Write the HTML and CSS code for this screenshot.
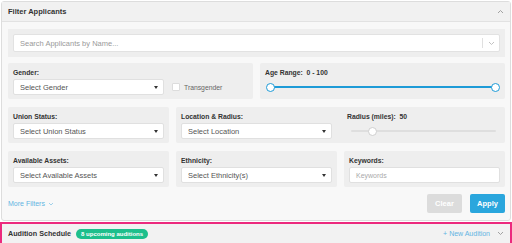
FILE: index.html
```html
<!DOCTYPE html>
<html lang="en">
<head>
  <meta charset="UTF-8">
  <meta name="viewport" content="width=device-width, initial-scale=1.0">
  <title>Filter Applicants</title>
  <link rel="stylesheet" href="styles.css">
</head>
<body>
  <div class="card">
    <div class="card-head">
      <span class="card-title">Filter Applicants</span>
      <svg class="chev" width="7" height="5" viewBox="0 0 7 5"><path d="M1 4 L3.5 1.5 L6 4" fill="none" stroke="#999" stroke-width="0.9"/></svg>
    </div>

    <div class="card-body">
      <div class="search-band">
        <div class="search-box">
          <span class="placeholder">Search Applicants by Name...</span>
          <span class="search-tools">
            <i class="divider"></i>
            <svg width="7" height="5" viewBox="0 0 7 5"><path d="M1 1 L3.5 3.5 L6 1" fill="none" stroke="#bbb" stroke-width="0.9"/></svg>
          </span>
        </div>
      </div>

      <div class="filters">
        <div class="panel span-3">
          <div class="label">Gender:</div>
          <div class="inline">
            <div class="select">Select Gender<i class="caret"></i></div>
            <label class="check"><span class="box"></span>Transgender</label>
          </div>
        </div>

        <div class="panel span-3">
          <div class="label">Age Range:&nbsp; 0 - 100</div>
          <div class="range range-age">
            <div class="track track-blue"></div>
            <span class="knob knob-blue" style="left:0%"></span>
            <span class="knob knob-blue" style="left:100%"></span>
          </div>
        </div>

        <div class="panel span-2">
          <div class="label">Union Status:</div>
          <div class="select">Select Union Status<i class="caret"></i></div>
        </div>

        <div class="panel span-4 location">
          <div class="loc-main">
            <div class="label">Location &amp; Radius:</div>
            <div class="select">Select Location<i class="caret"></i></div>
          </div>
          <div class="loc-radius">
            <div class="label">Radius (miles):&nbsp; 50</div>
            <div class="range range-radius">
              <div class="track"></div>
              <span class="knob" style="left:15%"></span>
            </div>
          </div>
        </div>

        <div class="panel span-2">
          <div class="label">Available Assets:</div>
          <div class="select">Select Available Assets<i class="caret"></i></div>
        </div>

        <div class="panel span-2">
          <div class="label">Ethnicity:</div>
          <div class="select">Select Ethnicity(s)<i class="caret"></i></div>
        </div>

        <div class="panel span-2">
          <div class="label">Keywords:</div>
          <div class="input">Keywords</div>
        </div>
      </div>

      <div class="actions">
        <a class="more">More Filters
          <svg width="6" height="4" viewBox="0 0 6 4"><path d="M1 1 L3 3 L5 1" fill="none" stroke="#8cc6e6" stroke-width="0.8"/></svg>
        </a>
        <div class="buttons">
          <button class="btn btn-clear">Clear</button>
          <button class="btn btn-apply">Apply</button>
        </div>
      </div>
    </div>
  </div>

  <div class="schedule">
    <div class="schedule-left">
      <span class="schedule-title">Audition Schedule</span>
      <span class="badge">8 upcoming auditions</span>
    </div>
    <div class="schedule-right">
      <a class="new-link">+ New Audition</a>
      <svg width="7" height="5" viewBox="0 0 7 5"><path d="M1 1 L3.5 3.5 L6 1" fill="none" stroke="#999" stroke-width="0.9"/></svg>
    </div>
  </div>
</body>
</html>
```

FILE: styles.css
```css
body {
  margin: 0;
  background: #fff;
  font-family: "Liberation Sans", Arial, sans-serif;
  color: #333;
}
.card {
  margin: 1px 1px 0;
  width: 508px;
  border: 1px solid #dddddd;
  border-radius: 3px;
  background: #f8f8f8;
}
.card-head {
  height: 19px;
  background: #f1f1f1;
  border-bottom: 1px solid #e2e2e2;
  display: flex;
  align-items: center;
  justify-content: space-between;
  padding: 0 6px;
}
.card-title {
  font-size: 7.5px;
  font-weight: bold;
  color: #333;
}
.card-body {
  padding: 7px 5px 7px 6px;
}
.search-band {
  background: #eeeeee;
  padding: 5px;
}
.search-box {
  height: 18px;
  box-sizing: border-box;
  background: #fff;
  border: 1px solid #e2e2e2;
  border-radius: 2px;
  display: flex;
  align-items: center;
  justify-content: space-between;
  padding: 0 4px 0 6px;
}
.placeholder {
  font-size: 7.5px;
  color: #9a9a9a;
}
.search-tools {
  display: flex;
  align-items: center;
  gap: 5px;
}
.divider {
  width: 1px;
  height: 10px;
  background: #e0e0e0;
}
.filters {
  display: grid;
  grid-template-columns: repeat(6, 1fr);
  column-gap: 7px;
  row-gap: 8px;
  margin-top: 6px;
}
.span-2 { grid-column: span 2; }
.span-3 { grid-column: span 3; }
.span-4 { grid-column: span 4; }
.panel {
  background: #eeeeee;
  padding: 5px 5px 4px;
  border-radius: 2px;
}
.label {
  font-size: 6.8px;
  font-weight: bold;
  color: #333;
  line-height: 9px;
  margin-bottom: 2px;
  white-space: nowrap;
}
.select, .input {
  width: 151px;
  height: 16px;
  box-sizing: border-box;
  background: #fff;
  border: 1px solid #e0e0e0;
  border-radius: 2px;
  font-size: 7.5px;
  color: #555;
  padding: 0 5px 0 6px;
  display: flex;
  align-items: center;
  justify-content: space-between;
  white-space: nowrap;
}
.input {
  color: #aaa;
  font-size: 7px;
}
.caret {
  width: 0;
  height: 0;
  border-left: 2px solid transparent;
  border-right: 2px solid transparent;
  border-top: 3px solid #333;
}
.inline {
  display: flex;
  align-items: center;
  gap: 8px;
}
.check {
  display: flex;
  align-items: center;
  gap: 4px;
  font-size: 6.8px;
  color: #666;
}
.box {
  width: 6px;
  height: 6px;
  background: #fff;
  border: 1px solid #dcdcdc;
  border-radius: 1px;
}
.range {
  position: relative;
  height: 16px;
  display: flex;
  align-items: center;
}
.range-age {
  margin: 0 5px;
}
.track {
  flex: 1;
  height: 2px;
  background: #dedede;
  border-radius: 1px;
}
.track-blue {
  background: #1e9bd7;
}
.knob {
  position: absolute;
  top: 50%;
  width: 7px;
  height: 7px;
  margin: -4.5px 0 0 -4.5px;
  background: #fff;
  border: 1px solid #cfcfcf;
  border-radius: 50%;
}
.knob-blue {
  border-color: #1e9bd7;
}
.location {
  display: flex;
}
.loc-radius {
  flex: 1;
  margin-left: 15px;
}
.range-radius {
  margin: 0 4px 0 4px;
}
.actions {
  display: flex;
  align-items: center;
  justify-content: space-between;
  margin-top: 7px;
}
.more {
  font-size: 7px;
  color: #62b4e2;
  display: flex;
  align-items: center;
  gap: 3px;
}
.buttons {
  display: flex;
  gap: 8px;
}
.btn {
  width: 35px;
  height: 19px;
  padding: 0;
  border: none;
  border-radius: 2px;
  font-family: inherit;
  font-size: 7.5px;
  font-weight: bold;
  color: #fff;
}
.btn-clear {
  background: #dcdcdc;
}
.btn-apply {
  background: #2aa6dd;
}
.schedule {
  margin-top: 1px;
  height: 19px;
  border: 2px solid #ec2a7e;
  background: #f2f2f2;
  display: flex;
  align-items: center;
  justify-content: space-between;
  padding: 0 6px 0 6px;
}
.schedule-left {
  display: flex;
  align-items: center;
  gap: 5px;
}
.schedule-title {
  font-size: 7.2px;
  font-weight: bold;
  color: #333;
}
.badge {
  background: #1dbf8c;
  color: #fff;
  font-size: 6px;
  font-weight: bold;
  padding: 2px 5px;
  border-radius: 6px;
}
.schedule-right {
  display: flex;
  align-items: center;
  gap: 7px;
}
.new-link {
  font-size: 7px;
  color: #62b4e2;
}
```
